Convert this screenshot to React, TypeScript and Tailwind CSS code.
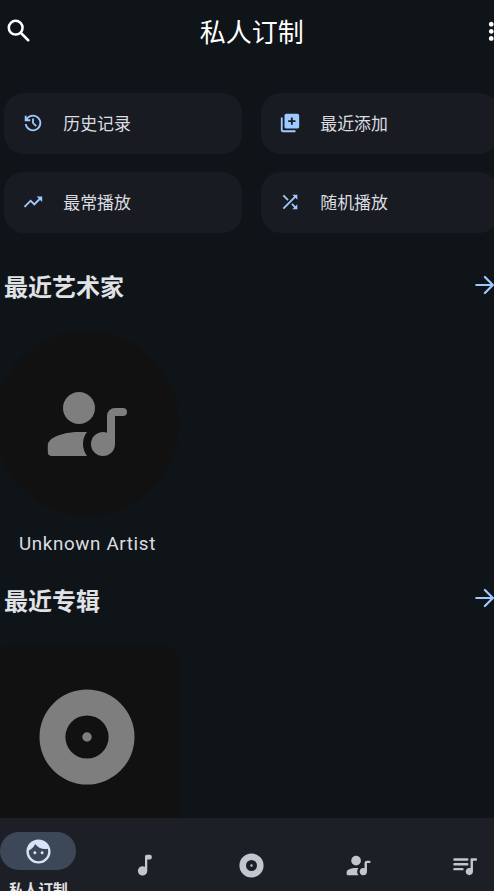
import type { ReactNode } from 'react';

const CJK = "font-['Noto_Sans_CJK_SC',sans-serif]";

function Icon({ d, className, viewBox = '0 0 24 24' }: { d: string; className: string; viewBox?: string }) {
  return (
    <svg viewBox={viewBox} fill="currentColor" className={`shrink-0 ${className}`}>
      <path fillRule="evenodd" d={d} />
    </svg>
  );
}

const MORE =
  'M12 8c1.1 0 2-.9 2-2s-.9-2-2-2-2 .9-2 2 .9 2 2 2zm0 2c-1.1 0-2 .9-2 2s.9 2 2 2 2-.9 2-2-.9-2-2-2zm0 6c-1.1 0-2 .9-2 2s.9 2 2 2 2-.9 2-2-.9-2-2-2z';
const HISTORY =
  'M480-120q-138 0-240.5-91.5T122-440h82q14 104 92.5 172T480-200q117 0 198.5-81.5T760-480q0-117-81.5-198.5T480-760q-69 0-129 32t-101 88h110v80H120v-240h80v94q51-64 124.5-99T480-840q75 0 140.5 28.5t114 77q48.5 48.5 77 114T840-480q0 75-28.5 140.5t-77 114q-48.5 48.5-114 77T480-120Zm112-192L440-464v-216h80v184l128 128-56 56Z';
const LIBRARY_ADD =
  'M4 6H2v14c0 1.1.9 2 2 2h14v-2H4V6zm16-4H8c-1.1 0-2 .9-2 2v12c0 1.1.9 2 2 2h12c1.1 0 2-.9 2-2V4c0-1.1-.9-2-2-2zm-2 9h-3v3h-2v-3h-3V9h3V6h2v3h3v2z';
const TRENDING =
  'M16 6l2.29 2.29-4.88 4.88-4-4L2 16.59 3.41 18l6-6 4 4 6.3-6.29L22 12V6z';
const SHUFFLE =
  'M10.59 9.17L5.41 4 4 5.41l5.17 5.17 1.42-1.41zM14.5 4l2.04 2.04L4 18.59 5.41 20 17.96 7.46 20 9.5V4h-5.5zm.33 9.41l-1.41 1.41 3.13 3.13L14.5 20H20v-5.5l-2.04 2.04-3.13-3.13z';
const FACE =
  'M9 11.75c-.69 0-1.25.56-1.25 1.25s.56 1.25 1.25 1.25 1.25-.56 1.25-1.25-.56-1.25-1.25-1.25zm6 0c-.69 0-1.25.56-1.25 1.25s.56 1.25 1.25 1.25 1.25-.56 1.25-1.25-.56-1.25-1.25-1.25zM12 2C6.48 2 2 6.48 2 12s4.48 10 10 10 10-4.48 10-10S17.52 2 12 2zm0 18c-4.41 0-8-3.59-8-8 0-.29.02-.58.05-.86 2.36-1.05 4.23-2.98 5.21-5.37C11.07 8.33 14.05 10 17.42 10c.78 0 1.53-.09 2.25-.26.21.71.33 1.47.33 2.26 0 4.41-3.59 8-8 8z';
const QUEUE =
  'M14.3 6H3.7a1 1 0 0 0 0 2h10.6a1 1 0 0 0 0-2zm0 4H3.7a1 1 0 0 0 0 2h10.6a1 1 0 0 0 0-2zM3.7 16h6.6a1 1 0 0 0 0-2H3.7a1 1 0 0 0 0 2zM17.6 6a.6.6 0 0 0-.6.6v7.58c-.31-.11-.65-.18-1-.18-1.66 0-3 1.34-3 3s1.34 3 3 3 3-1.34 3-3V8h2.4a1 1 0 0 0 0-2z';
const ALBUM =
  'M12 2a10 10 0 1 0 0 20 10 10 0 0 0 0-20zm0 5.45a4.55 4.55 0 1 1 0 9.1 4.55 4.55 0 0 1 0-9.1zM12 11a1 1 0 1 0 0 2 1 1 0 0 0 0-2z';
const NOTE =
  'M13.9 3a1.5 1.5 0 0 0-1.5 1.5v8.6a3.9 3.9 0 1 0 1.9 3.4V7h2.2a1.5 1.5 0 0 0 1.5-1.5v-1a1.5 1.5 0 0 0-1.5-1.5z';

function ArtistIcon({ className }: { className: string }) {
  return (
    <svg viewBox="0 0 24 24" fill="currentColor" className={`shrink-0 ${className}`}>
      <circle cx="10" cy="8" r="4" />
      <path d="M3.2 20a1 1 0 0 1-1-1v-1.7C2.2 15.6 5.6 14 10 14H12A5 5 0 0 0 12 20z" />
      <circle cx="16" cy="17" r="3" />
      <path d="M17 17v-7a2 2 0 0 1 2-2h2a1 1 0 0 1 0 2H19v7z" />
    </svg>
  );
}

function Shortcut({ icon, label }: { icon: ReactNode; label: string }) {
  return (
    <div className="flex h-[60.5px] items-center rounded-[20px] bg-[#181c22] pl-[18.3px]">
      {icon}
      <span className="ml-[19px] text-[16.9px] leading-6 text-[#dcdde1]">{label}</span>
    </div>
  );
}

function SectionHeader({ title }: { title: string }) {
  return (
    <div className="flex h-9 w-[490px] items-center justify-between">
      <h2 className="-mt-px text-[24px] font-bold leading-9 text-[#e1e2e6]">{title}</h2>
      <svg
        viewBox="0 0 20 20"
        className="-mt-1 size-5 shrink-0 text-[#9fcaff]"
        fill="none"
        stroke="currentColor"
        strokeWidth="2.2"
        strokeLinecap="round"
        strokeLinejoin="round"
      >
        <path d="M2.3 10h16.2M10.9 2 18.9 10 10.9 18" />
      </svg>
    </div>
  );
}

export default function App() {
  return (
    <div className={`flex h-[891px] w-[494px] flex-col overflow-hidden bg-[#0f1418] ${CJK}`}>
      <header className="flex h-[62px] w-[506px] shrink-0 items-center justify-between pl-[3.5px]">
        <svg
          viewBox="0 0 24 24"
          className="size-[29.5px] shrink-0 text-white"
          fill="none"
          stroke="currentColor"
          strokeWidth="2.1"
          strokeLinecap="round"
        >
          <circle cx="9.5" cy="9.5" r="5.6" />
          <path d="M13.8 13.8 19.7 19.7" />
        </svg>
        <h1 className="-ml-[7px] -mt-px text-[26px] leading-9 text-white">私人订制</h1>
        <Icon d={MORE} className="mt-[0.5px] size-[28.5px] text-white" />
      </header>

      <main className="min-h-0 flex-1 overflow-hidden pl-1">
        <div className="mt-[31px] grid w-[495px] grid-cols-2 gap-x-[19px] gap-y-[18.5px]">
          <Shortcut icon={<Icon d={HISTORY} viewBox="0 -960 960 960" className="size-[22px] text-[#9fcaff]" />} label="历史记录" />
          <Shortcut icon={<Icon d={LIBRARY_ADD} className="size-[22px] text-[#9fcaff]" />} label="最近添加" />
          <Shortcut icon={<Icon d={TRENDING} className="size-[22px] text-[#9fcaff]" />} label="最常播放" />
          <Shortcut icon={<Icon d={SHUFFLE} className="size-[22px] text-[#9fcaff]" />} label="随机播放" />
        </div>

        <section className="mt-[36px]">
          <SectionHeader title="最近艺术家" />
          <div className="-ml-[10px] mt-[26.5px] flex w-[185.4px] flex-col items-center">
            <div className="flex size-[185.4px] items-center justify-center rounded-full bg-[#111111]">
              <ArtistIcon className="size-24 text-[#7e7e7e]" />
            </div>
            <p className="ml-[1.5px] mt-4 font-['Roboto',sans-serif] text-[18.8px] leading-6 tracking-[0.65px] text-[#dcdde1]">Unknown Artist</p>
          </div>
        </section>

        <section className="mt-[26px]">
          <SectionHeader title="最近专辑" />
          <div className="-ml-[10px] mt-[26px] flex size-[186px] items-center justify-center rounded-[20px] bg-[#111111]">
            <Icon d={ALBUM} className="size-[114px] text-[#7e7e7e]" />
          </div>
        </section>
      </main>

      <nav className="-ml-[15px] grid h-[73px] w-[533px] shrink-0 grid-cols-5 overflow-hidden bg-[#1c2026] text-[#c3c6cf]">
        <div className="flex flex-col items-center pt-[14px]">
          <div className="flex h-[38px] w-[76px] shrink-0 items-center justify-center rounded-full bg-[#3c4858]">
            <Icon d={FACE} className="size-[29px] text-[#d7e3f8]" />
          </div>
          <span className="mt-[7px] text-[14.7px] font-bold leading-6 text-[#e1e2e6]">私人订制</span>
        </div>
        <div className="flex justify-center pt-[33px]">
          <Icon d={NOTE} className="size-[29px]" />
        </div>
        <div className="flex justify-center pt-[33px]">
          <Icon d={ALBUM} className="size-[29px]" />
        </div>
        <div className="flex justify-center pt-[33px]">
          <ArtistIcon className="size-[29px]" />
        </div>
        <div className="flex justify-center pt-[33px]">
          <Icon d={QUEUE} className="size-[29px]" />
        </div>
      </nav>
    </div>
  );
}
